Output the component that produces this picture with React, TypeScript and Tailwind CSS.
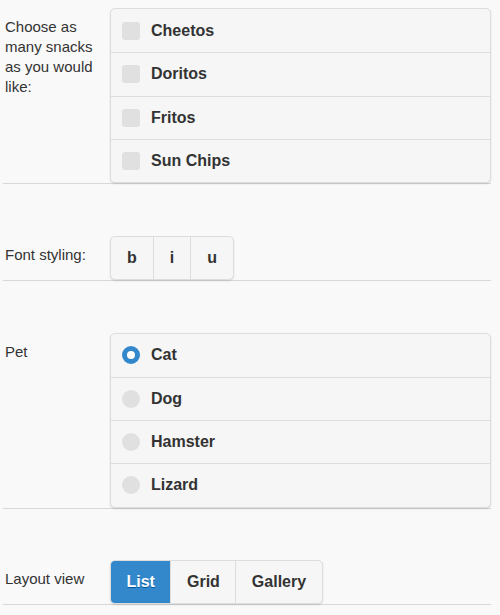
import { useState } from 'react'

const SNACKS = ['Cheetos', 'Doritos', 'Fritos', 'Sun Chips']
const PETS = ['Cat', 'Dog', 'Hamster', 'Lizard']
const STYLES = ['b', 'i', 'u']
const VIEWS = ['List', 'Grid', 'Gallery']

function Field({ label, first, children }: { label: string; first?: boolean; children: React.ReactNode }) {
  return (
    <div className={`flex border-b border-[#d8d8d8] pt-2 ${first ? '' : 'mt-[43.75px]'}`}>
      <div className="w-[107px] shrink-0 pl-[2px] pr-[6px] pt-[9px] text-[15px] leading-5 text-[#333]">
        {label}
      </div>
      {children}
    </div>
  )
}

export default function App() {
  const [snacks, setSnacks] = useState<string[]>([])
  const [pet, setPet] = useState('Cat')
  const [view, setView] = useState('List')

  return (
    <div className="min-h-screen bg-[#f9f9f9] pl-[3px] pr-[9px] font-['Liberation_Sans',Arial,sans-serif] text-[#333]">
      {/* Snacks */}
      <Field label="Choose as many snacks as you would like:" first>
        <div className="flex-1 overflow-hidden rounded-[5px] border border-[#dddddd] bg-[#f6f6f6] shadow-[0_1px_2px_rgba(0,0,0,0.12)]">
          {SNACKS.map((s, i) => (
            <button
              key={s}
              onClick={() => setSnacks(snacks.includes(s) ? snacks.filter((x) => x !== s) : [...snacks, s])}
              className={`flex h-[43.25px] w-full items-center gap-[11px] pl-[11px] text-left text-base font-bold ${i ? 'border-t border-[#dddddd]' : ''}`}
            >
              <span className={`h-[18px] w-[18px] rounded-[3px] ${snacks.includes(s) ? 'bg-[#3388cc]' : 'bg-[#e0e0e0]'}`} />
              {s}
            </button>
          ))}
        </div>
      </Field>

      {/* Font styling */}
      <Field label="Font styling:">
        <div className="flex self-start">
          <div className="flex overflow-hidden rounded-[5px] border border-[#dddddd] bg-[#f6f6f6] shadow-[0_1px_2px_rgba(0,0,0,0.12)]">
            {STYLES.map((s, i) => (
              <button
                key={s}
                className={`h-[42px] px-4 text-base font-bold ${i ? 'border-l border-[#dddddd]' : ''}`}
              >
                {s}
              </button>
            ))}
          </div>
        </div>
      </Field>

      {/* Pet */}
      <Field label="Pet">
        <div className="flex-1 overflow-hidden rounded-[5px] border border-[#dddddd] bg-[#f6f6f6] shadow-[0_1px_2px_rgba(0,0,0,0.12)]">
          {PETS.map((p, i) => (
            <button
              key={p}
              onClick={() => setPet(p)}
              className={`flex h-[43.25px] w-full items-center gap-[11px] pl-[11px] text-left text-base font-bold ${i ? 'border-t border-[#dddddd]' : ''}`}
            >
              {pet === p ? (
                <span className="h-[18px] w-[18px] rounded-full border-[5px] border-[#3388cc] bg-white" />
              ) : (
                <span className="h-[18px] w-[18px] rounded-full bg-[#e0e0e0]" />
              )}
              {p}
            </button>
          ))}
        </div>
      </Field>

      {/* Layout view */}
      <Field label="Layout view">
        <div className="flex self-start">
          <div className="flex overflow-hidden rounded-[5px] border border-[#dddddd] bg-[#f6f6f6] shadow-[0_1px_2px_rgba(0,0,0,0.12)]">
            {VIEWS.map((v, i) => (
              <button
                key={v}
                onClick={() => setView(v)}
                className={`h-[42px] px-[15.5px] text-base font-bold ${i ? 'border-l border-[#dddddd]' : ''} ${
                  view === v ? 'bg-[#3388cc] text-white [text-shadow:0_1px_0_#005599]' : ''
                }`}
              >
                {v}
              </button>
            ))}
          </div>
        </div>
      </Field>
    </div>
  )
}
